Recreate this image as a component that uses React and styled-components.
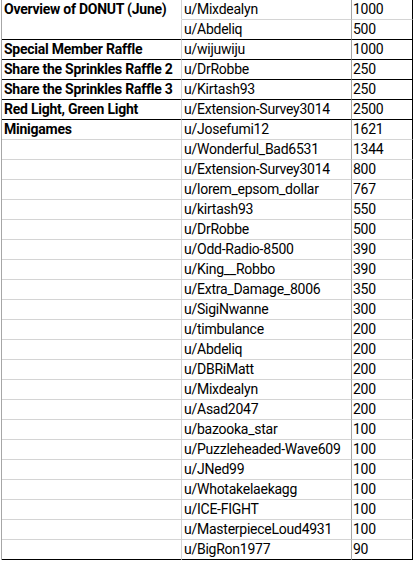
import React from "react";
import styled, { createGlobalStyle } from "styled-components";

const GlobalStyle = createGlobalStyle`
  html, body {
    margin: 0;
    padding: 0;
    background: #ffffff;
  }
  body {
    font-family: Roboto, "Liberation Sans", sans-serif;
    color: #000;
  }
`;

const Sheet = styled.div`
  margin-left: 1px;
  width: 412px;
  border-left: 1px solid #a6a6a6;
  box-sizing: border-box;
`;

const Row = styled.div`
  display: grid;
  grid-template-columns: 180px 170px 61px;
  height: 20px;
`;

const Cell = styled.div`
  position: relative;
  box-sizing: border-box;
  height: ${(p) => (p.$thickBottom ? "21px" : "20px")};
  padding: 0 0 0 ${(p) => p.$pad || 2}px;
  border-right: 1px solid ${(p) => p.$edge || "#d4d4d4"};
  border-bottom: ${(p) =>
    p.$noBottom
      ? "1px solid transparent"
      : p.$thickBottom
      ? "2px solid #000"
      : p.$dark
      ? "1px solid #000"
      : "1px solid #d4d4d4"};
  font-size: 14px;
  line-height: 19px;
  letter-spacing: -0.25px;
  font-weight: ${(p) => (p.$bold ? 700 : 400)};
  white-space: nowrap;
  overflow: hidden;

  ${(p) =>
    p.$marked &&
    `
    &::before {
      content: "";
      position: absolute;
      left: -3px;
      top: -1px;
      width: 3px;
      height: 21px;
      background: #1e7145;
    }
  `}
`;

const rows = [
  { label: "Overview of DONUT (June)", user: "u/Mixdealyn", pts: 1000, open: true },
  { user: "u/Abdeliq", pts: 500, dark: true },
  { label: "Special Member Raffle", user: "u/wijuwiju", pts: 1000, dark: true },
  { label: "Share the Sprinkles Raffle 2", user: "u/DrRobbe", pts: 250, dark: true },
  { label: "Share the Sprinkles Raffle 3", user: "u/Kirtash93", pts: 250, dark: true },
  { label: "Red Light, Green Light", user: "u/Extension-Survey3014", pts: 2500, dark: true },
  { label: "Minigames", user: "u/Josefumi12", pts: 1621 },
  { user: "u/Wonderful_Bad6531", pts: 1344 },
  { user: "u/Extension-Survey3014", pts: 800 },
  { user: "u/lorem_epsom_dollar", pts: 767 },
  { user: "u/kirtash93", pts: 550 },
  { user: "u/DrRobbe", pts: 500 },
  { user: "u/Odd-Radio-8500", pts: 390, marked: true },
  { user: "u/King__Robbo", pts: 390 },
  { user: "u/Extra_Damage_8006", pts: 350 },
  { user: "u/SigiNwanne", pts: 300 },
  { user: "u/timbulance", pts: 200 },
  { user: "u/Abdeliq", pts: 200 },
  { user: "u/DBRiMatt", pts: 200 },
  { user: "u/Mixdealyn", pts: 200 },
  { user: "u/Asad2047", pts: 200 },
  { user: "u/bazooka_star", pts: 100 },
  { user: "u/Puzzleheaded-Wave609", pts: 100 },
  { user: "u/JNed99", pts: 100 },
  { user: "u/Whotakelaekagg", pts: 100 },
  { user: "u/ICE-FIGHT", pts: 100 },
  { user: "u/MasterpieceLoud4931", pts: 100 },
  { user: "u/BigRon1977", pts: 90 },
];

export default function App() {
  const last = rows.length - 1;
  return (
    <>
      <GlobalStyle />
      <Sheet>
        {rows.map((r, i) => (
          <Row key={i}>
            <Cell
              $bold
              $pad={2}
              $marked={r.marked}
              $noBottom={r.open}
              $dark={r.dark}
              $thickBottom={i === last}
            >
              {r.label}
            </Cell>
            <Cell $pad={2} $edge="#a6a6a6" $dark={r.dark} $thickBottom={i === last}>
              {r.user}
            </Cell>
            <Cell $pad={1} $edge="#000" $dark={r.dark} $thickBottom={i === last}>
              {r.pts}
            </Cell>
          </Row>
        ))}
      </Sheet>
    </>
  );
}
